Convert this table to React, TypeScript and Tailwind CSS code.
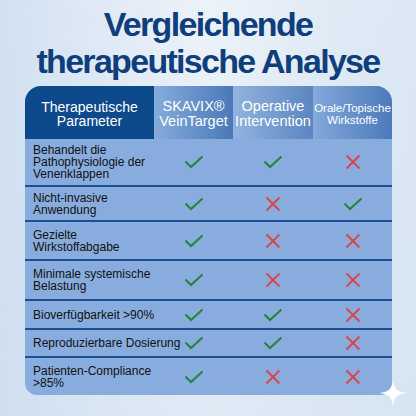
import React from 'react';

type Mark = 'y' | 'n';

const rows: { label: React.ReactNode; h: string; marks: Mark[] }[] = [
  { label: <>Behandelt die<br />Pathophysiologie der<br />Venenklappen</>, h: 'h-[48px]', marks: ['y', 'y', 'n'] },
  { label: <>Nicht-invasive<br />Anwendung</>, h: 'h-[35px]', marks: ['y', 'n', 'y'] },
  { label: <>Gezielte<br />Wirkstoffabgabe</>, h: 'h-[39px]', marks: ['y', 'n', 'n'] },
  { label: <>Minimale systemische<br />Belastung</>, h: 'h-[40px]', marks: ['y', 'n', 'n'] },
  { label: <>Bioverfügbarkeit &gt;90%</>, h: 'h-[29px]', marks: ['y', 'y', 'n'] },
  { label: <>Reproduzierbare Dosierung</>, h: 'h-[28px]', marks: ['y', 'y', 'n'] },
  { label: <>Patienten-Compliance<br />&gt;85%</>, h: 'h-[37px]', marks: ['y', 'n', 'n'] },
];

function Check() {
  return (
    <svg width="20" height="14" viewBox="0 0 20 14">
      <path d="M1.5 6.5 L7 12 L18.5 1.5" fill="none" stroke="#23843a" strokeWidth="2" />
    </svg>
  );
}

function Cross() {
  return (
    <svg width="16" height="16" viewBox="0 0 16 16">
      <path d="M1.5 1.5 L14.5 14.5 M14.5 1.5 L1.5 14.5" fill="none" stroke="#d9474b" strokeWidth="2" />
    </svg>
  );
}

function Sparkle() {
  return (
    <svg width="30" height="30" viewBox="0 0 30 30" className="absolute left-[378px] top-[378px]">
      <path d="M15 1 C16 11 19 14 29 15 C19 16 16 19 15 29 C14 19 11 16 1 15 C11 14 14 11 15 1 Z" fill="#ffffff" opacity="0.95" />
    </svg>
  );
}

export default function App() {
  return (
    <div
      className="relative w-[416px] h-[416px] overflow-hidden bg-gradient-to-br from-[#f2f6fb] via-[#e6eef7] to-[#d9e6f2]"
      style={{ fontFamily: '"Liberation Sans", Arial, sans-serif' }}
    >
      <div className="absolute inset-0 bg-gradient-to-r from-[#c9dbef]/80 via-transparent to-[#d6e4f2]/70" />
      <div className="relative flex flex-col items-center pt-[6px]">
        <div className="text-[34px] leading-[37px] font-bold tracking-[-0.05em] text-[#0f3e7c] text-center">
          Vergleichende<br />therapeutische Analyse
        </div>
      </div>

      <div className="relative ml-[25px] mt-[6px] w-[367px] rounded-t-[16px] rounded-b-[12px] bg-[#88acde] overflow-hidden">
        <div className="grid grid-cols-[129px_79px_80px_79px] h-[53px] text-white text-center">
          <div className="flex items-center justify-center bg-[#0d4a8c] text-[14px] leading-[14px] pt-[2px]">
            Therapeutische<br />Parameter
          </div>
          <div className="flex items-center justify-center bg-gradient-to-r from-[#86acdc] to-[#4a78b8] text-[14.5px] leading-[14.5px] pt-[2px]">
            SKAVIX®<br />VeinTarget
          </div>
          <div className="flex items-center justify-center bg-gradient-to-r from-[#92b3de] to-[#5b86c1] text-[14.5px] leading-[14.5px] pt-[2px]">
            Operative<br />Intervention
          </div>
          <div className="flex items-center justify-center bg-gradient-to-r from-[#83a8da] to-[#4c7aba] text-[11.5px] leading-[12px] pt-[2px]">
            Orale/Topische<br />Wirkstoffe
          </div>
        </div>

        {rows.map((r, i) => (
          <div
            key={i}
            className={`grid grid-cols-[129px_79px_80px_79px] ${r.h} ${i < rows.length - 1 ? 'border-b-2 border-[#1c4f8f]' : ''}`}
          >
            <div className="flex items-center pl-[8px] whitespace-nowrap text-[12px] leading-[12px] text-[#111]">
              <div>{r.label}</div>
            </div>
            {r.marks.map((m, j) => (
              <div key={j} className="flex items-center justify-center">
                {m === 'y' ? <Check /> : <Cross />}
              </div>
            ))}
          </div>
        ))}
      </div>
      <Sparkle />
    </div>
  );
}
